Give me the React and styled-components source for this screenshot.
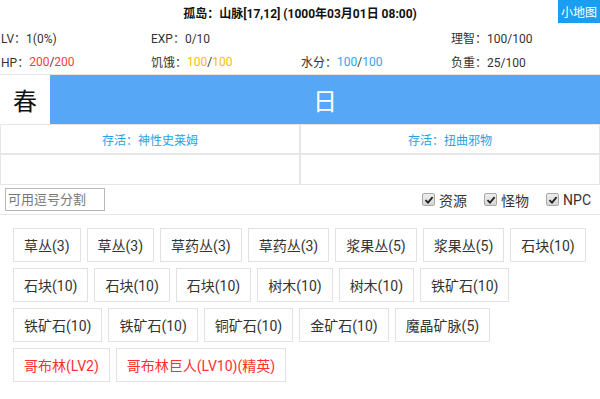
import React from "react";
import styled, { createGlobalStyle } from "styled-components";

const Global = createGlobalStyle`
  html, body { margin: 0; padding: 0; background: #fff; }
  body { font-family: "Roboto", "Noto Sans CJK SC", sans-serif; color: #333; }
  * { box-sizing: border-box; }
`;

const Page = styled.div`
  width: 600px;
  height: 399px;
  overflow: hidden;
  background: #fff;
`;

const Header = styled.div`
  display: grid;
  grid-template-columns: 1fr auto 1fr;
  height: 25px;
`;

const Title = styled.div`
  grid-column: 2;
  align-self: center;
  font-size: 12px;
  font-weight: bold;
  color: #111;
  white-space: nowrap;
`;

const MapButton = styled.button`
  grid-column: 3;
  justify-self: end;
  align-self: start;
  height: 23px;
  padding: 0 3px;
  border: none;
  background: #1a9ff0;
  color: #fff;
  font-family: inherit;
  font-size: 12px;
  cursor: pointer;
`;

const StatsGrid = styled.div`
  display: grid;
  grid-template-columns: repeat(4, 150px);
  grid-template-rows: 24px 25px;
`;

const Stat = styled.div`
  display: flex;
  align-items: center;
  padding-left: 1px;
  font-size: 12px;
  color: #333;
  white-space: nowrap;
`;

const Num = styled.span`
  color: ${(p) => p.$color || "inherit"};
`;

const SeasonRow = styled.div`
  display: flex;
  height: 50px;
  border-top: 1px solid #e6e6e6;
`;

const SeasonCell = styled.div`
  width: 50px;
  display: flex;
  align-items: center;
  justify-content: center;
  font-size: 24px;
  color: #111;
`;

const DayBar = styled.div`
  flex: 1;
  display: flex;
  align-items: center;
  justify-content: center;
  background: #57a7f7;
  color: #fff;
  font-size: 24px;
`;

const InfoGrid = styled.div`
  display: grid;
  grid-template-columns: 300px 300px;
  grid-template-rows: 30px 31px;
`;

const InfoCell = styled.div`
  border: 1px solid #e6e6e6;
  display: flex;
  align-items: center;
  justify-content: center;
  font-size: 12px;
  color: #28a2e6;
`;

const FilterBar = styled.div`
  display: flex;
  align-items: center;
  justify-content: space-between;
  height: 30px;
  padding: 0 9px 0 5px;
  border-bottom: 1px solid #e6e6e6;
`;

const SearchInput = styled.input`
  width: 100px;
  height: 23px;
  border: 1px solid #b8b8b8;
  padding: 0 2px;
  font-family: inherit;
  font-size: 13px;
  color: #333;
  outline: none;
  &::placeholder { color: #777; }
`;

const CheckGroup = styled.div`
  display: flex;
  align-items: center;
  gap: 17px;
`;

const CheckLabel = styled.label`
  display: flex;
  align-items: center;
  gap: 4px;
  font-size: 14px;
  color: #333;
`;

const Box = styled.span`
  width: 13px;
  height: 13px;
  border: 1px solid #a8a8a8;
  border-radius: 2px;
  background: linear-gradient(#eee, #d6d6d6);
  display: flex;
  align-items: center;
  justify-content: center;
`;

const ButtonWrap = styled.div`
  display: flex;
  flex-wrap: wrap;
  gap: 6px;
  padding: 13px;
`;

const ItemButton = styled.button`
  height: 34px;
  padding: 0 10px;
  border: 1px solid #e2e2e2;
  background: #fff;
  font-family: inherit;
  font-size: 14px;
  color: ${(p) => (p.$danger ? "#ff3030" : "#333")};
  cursor: pointer;
  white-space: nowrap;
`;

const Check = ({ label }) => (
  <CheckLabel>
    <Box>
      <svg width="10" height="10" viewBox="0 0 10 10">
        <path d="M1.5 5.2 L4 7.6 L8.6 2.2" fill="none" stroke="#222" strokeWidth="1.8" />
      </svg>
    </Box>
    {label}
  </CheckLabel>
);

const items = [
  "草丛(3)", "草丛(3)", "草药丛(3)", "草药丛(3)", "浆果丛(5)", "浆果丛(5)", "石块(10)",
  "石块(10)", "石块(10)", "石块(10)", "树木(10)", "树木(10)", "铁矿石(10)",
  "铁矿石(10)", "铁矿石(10)", "铜矿石(10)", "金矿石(10)", "魔晶矿脉(5)",
];
const monsters = ["哥布林(LV2)", "哥布林巨人(LV10)(精英)"];

export default function App() {
  return (
    <Page>
      <Global />
      <Header>
        <Title>孤岛：山脉[17,12] (1000年03月01日 08:00)</Title>
        <MapButton>小地图</MapButton>
      </Header>
      <StatsGrid>
        <Stat>LV：1(0%)</Stat>
        <Stat>EXP：0/10</Stat>
        <Stat />
        <Stat>理智：100/100</Stat>
        <Stat>HP：<Num $color="#ff3b3b">200</Num>/<Num $color="#ff3b3b">200</Num></Stat>
        <Stat>饥饿：<Num $color="#fbbc0a">100</Num>/<Num $color="#fbbc0a">100</Num></Stat>
        <Stat>水分：<Num $color="#3a9ff2">100</Num>/<Num $color="#3a9ff2">100</Num></Stat>
        <Stat>负重：25/100</Stat>
      </StatsGrid>
      <SeasonRow>
        <SeasonCell>春</SeasonCell>
        <DayBar>日</DayBar>
      </SeasonRow>
      <InfoGrid>
        <InfoCell>存活：神性史莱姆</InfoCell>
        <InfoCell>存活：扭曲邪物</InfoCell>
        <InfoCell />
        <InfoCell />
      </InfoGrid>
      <FilterBar>
        <SearchInput placeholder="可用逗号分割" />
        <CheckGroup>
          <Check label="资源" />
          <Check label="怪物" />
          <Check label="NPC" />
        </CheckGroup>
      </FilterBar>
      <ButtonWrap>
        {items.map((t, i) => (
          <ItemButton key={i}>{t}</ItemButton>
        ))}
        {monsters.map((t, i) => (
          <ItemButton key={"m" + i} $danger>{t}</ItemButton>
        ))}
      </ButtonWrap>
    </Page>
  );
}
